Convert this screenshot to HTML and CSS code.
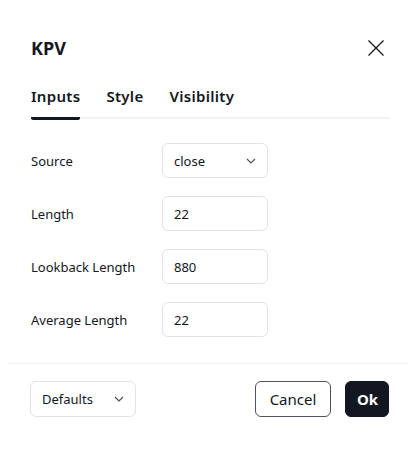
FILE: index.html
```html
<!DOCTYPE html>
<html lang="en">
<head>
    <meta charset="UTF-8">
    <meta name="viewport" content="width=device-width, initial-scale=1.0">
    <title>KPV settings</title>
    <link rel="stylesheet" href="styles.css">
</head>
<body>

    <div class="dialog">
        <div class="dialog-header">
            <h2 class="dialog-title">KPV</h2>
            <button class="close-btn" aria-label="Close">
                <svg width="18" height="18" viewBox="0 0 18 18"><path d="M1.5 1.5l15 15M16.5 1.5l-15 15" stroke="#131722" stroke-width="1.3" fill="none"/></svg>
            </button>
        </div>

        <div class="tabs">
            <span class="tab active">Inputs</span>
            <span class="tab">Style</span>
            <span class="tab">Visibility</span>
        </div>

        <div class="inputs">
            <div class="row">
                <label>Source</label>
                <div class="field select">
                    <span>close</span>
                    <svg class="chevron" width="10" height="6" viewBox="0 0 10 6"><path d="M1 1l4 4 4-4" stroke="#50535e" stroke-width="1.2" fill="none"/></svg>
                </div>
            </div>
            <div class="row">
                <label>Length</label>
                <div class="field">22</div>
            </div>
            <div class="row">
                <label>Lookback Length</label>
                <div class="field">880</div>
            </div>
            <div class="row">
                <label>Average Length</label>
                <div class="field">22</div>
            </div>
        </div>

        <div class="footer">
            <div class="field select defaults">
                <span>Defaults</span>
                <svg class="chevron" width="10" height="6" viewBox="0 0 10 6"><path d="M1 1l4 4 4-4" stroke="#50535e" stroke-width="1.2" fill="none"/></svg>
            </div>
            <div class="actions">
                <button class="btn btn-cancel">Cancel</button>
                <button class="btn btn-ok">Ok</button>
            </div>
        </div>
    </div>

</body>
</html>
```

FILE: styles.css
```css
body {
    margin: 0;
    background: #ffffff;
    font-family: "Noto Sans", "DejaVu Sans", sans-serif;
    color: #131722;
}
.dialog {
    width: 412px;
}
.dialog-header {
    display: flex;
    justify-content: space-between;
    align-items: center;
    padding: 30px 27px 0 31px;
    height: 36px;
}
.dialog-title {
    margin: 0;
    font-size: 18px;
    font-weight: 700;
}
.close-btn {
    background: none;
    border: none;
    padding: 0;
    display: flex;
}
.tabs {
    display: flex;
    gap: 26px;
    margin: 19px 22px 0 31px;
    border-bottom: 2px solid #f0f3fa;
    height: 32px;
}
.tab {
    font-size: 15px;
    font-weight: 600;
    line-height: 22px;
    letter-spacing: 0.3px;
}
.tab.active {
    border-bottom: 3px solid #131722;
    border-radius: 2px;
    margin-bottom: -3px;
}
.inputs {
    padding: 24px 0 0 31px;
    display: flex;
    flex-direction: column;
    gap: 18px;
}
.row {
    display: flex;
    align-items: center;
}
.row label {
    width: 131px;
    font-size: 13px;
    color: #131722;
}
.field {
    box-sizing: border-box;
    width: 106px;
    height: 35px;
    border: 1px solid #e0e3eb;
    border-radius: 6px;
    padding: 0 11px;
    display: flex;
    align-items: center;
    font-size: 13px;
}
.select {
    justify-content: space-between;
}
.footer {
    margin: 26px 5px 0 9px;
    border-top: 1px solid #f0f3fa;
    padding: 17px 18px 0 21px;
    display: flex;
    justify-content: space-between;
    align-items: center;
}
.defaults {
    height: 36px;
}
.actions {
    display: flex;
    gap: 14px;
}
.btn {
    height: 36px;
    border-radius: 6px;
    font-family: "Noto Sans", "DejaVu Sans", sans-serif;
    font-size: 15px;
    padding: 0 11px;
}
.btn-cancel {
    background: #ffffff;
    border: 1px solid #50535e;
    color: #131722;
    width: 76px;
}
.btn-ok {
    background: #131722;
    border: 1px solid #131722;
    color: #ffffff;
    font-weight: 700;
    width: 44px;
}
```
